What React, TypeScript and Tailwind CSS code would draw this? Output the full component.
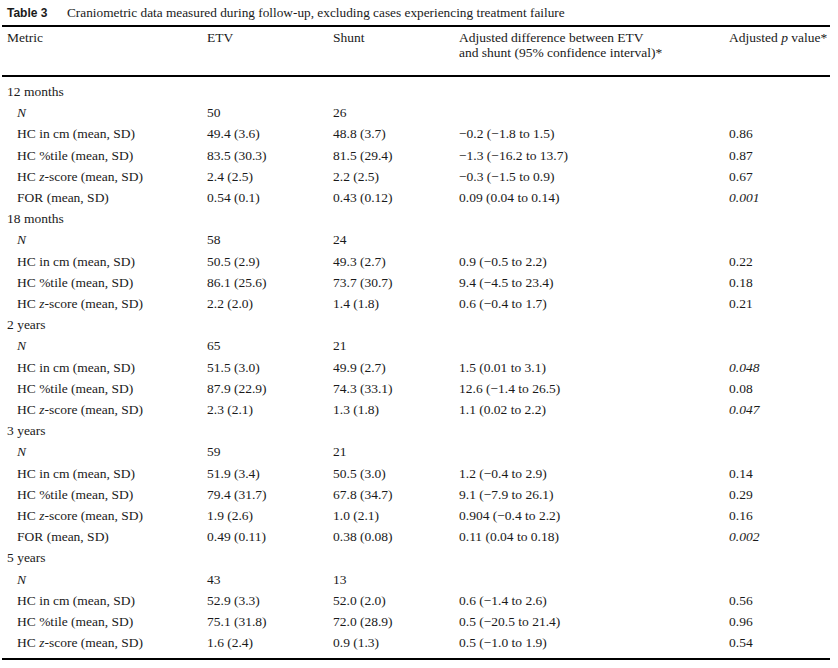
import React from 'react';

type Row = { label: React.ReactNode; etv: string; shunt: string; diff: string; p: string; pItalic?: boolean };
type Group = { title: string; rows: Row[] };

const z = <i>z</i>;

const groups: Group[] = [
  {
    title: '12 months',
    rows: [
      { label: <i>N</i>, etv: '50', shunt: '26', diff: '', p: '' },
      { label: 'HC in cm (mean, SD)', etv: '49.4 (3.6)', shunt: '48.8 (3.7)', diff: '−0.2 (−1.8 to 1.5)', p: '0.86' },
      { label: 'HC %tile (mean, SD)', etv: '83.5 (30.3)', shunt: '81.5 (29.4)', diff: '−1.3 (−16.2 to 13.7)', p: '0.87' },
      { label: <>HC {z}-score (mean, SD)</>, etv: '2.4 (2.5)', shunt: '2.2 (2.5)', diff: '−0.3 (−1.5 to 0.9)', p: '0.67' },
      { label: 'FOR (mean, SD)', etv: '0.54 (0.1)', shunt: '0.43 (0.12)', diff: '0.09 (0.04 to 0.14)', p: '0.001', pItalic: true },
    ],
  },
  {
    title: '18 months',
    rows: [
      { label: <i>N</i>, etv: '58', shunt: '24', diff: '', p: '' },
      { label: 'HC in cm (mean, SD)', etv: '50.5 (2.9)', shunt: '49.3 (2.7)', diff: '0.9 (−0.5 to 2.2)', p: '0.22' },
      { label: 'HC %tile (mean, SD)', etv: '86.1 (25.6)', shunt: '73.7 (30.7)', diff: '9.4 (−4.5 to 23.4)', p: '0.18' },
      { label: <>HC {z}-score (mean, SD)</>, etv: '2.2 (2.0)', shunt: '1.4 (1.8)', diff: '0.6 (−0.4 to 1.7)', p: '0.21' },
    ],
  },
  {
    title: '2 years',
    rows: [
      { label: <i>N</i>, etv: '65', shunt: '21', diff: '', p: '' },
      { label: 'HC in cm (mean, SD)', etv: '51.5 (3.0)', shunt: '49.9 (2.7)', diff: '1.5 (0.01 to 3.1)', p: '0.048', pItalic: true },
      { label: 'HC %tile (mean, SD)', etv: '87.9 (22.9)', shunt: '74.3 (33.1)', diff: '12.6 (−1.4 to 26.5)', p: '0.08' },
      { label: <>HC {z}-score (mean, SD)</>, etv: '2.3 (2.1)', shunt: '1.3 (1.8)', diff: '1.1 (0.02 to 2.2)', p: '0.047', pItalic: true },
    ],
  },
  {
    title: '3 years',
    rows: [
      { label: <i>N</i>, etv: '59', shunt: '21', diff: '', p: '' },
      { label: 'HC in cm (mean, SD)', etv: '51.9 (3.4)', shunt: '50.5 (3.0)', diff: '1.2 (−0.4 to 2.9)', p: '0.14' },
      { label: 'HC %tile (mean, SD)', etv: '79.4 (31.7)', shunt: '67.8 (34.7)', diff: '9.1 (−7.9 to 26.1)', p: '0.29' },
      { label: <>HC {z}-score (mean, SD)</>, etv: '1.9 (2.6)', shunt: '1.0 (2.1)', diff: '0.904 (−0.4 to 2.2)', p: '0.16' },
      { label: 'FOR (mean, SD)', etv: '0.49 (0.11)', shunt: '0.38 (0.08)', diff: '0.11 (0.04 to 0.18)', p: '0.002', pItalic: true },
    ],
  },
  {
    title: '5 years',
    rows: [
      { label: <i>N</i>, etv: '43', shunt: '13', diff: '', p: '' },
      { label: 'HC in cm (mean, SD)', etv: '52.9 (3.3)', shunt: '52.0 (2.0)', diff: '0.6 (−1.4 to 2.6)', p: '0.56' },
      { label: 'HC %tile (mean, SD)', etv: '75.1 (31.8)', shunt: '72.0 (28.9)', diff: '0.5 (−20.5 to 21.4)', p: '0.96' },
      { label: <>HC {z}-score (mean, SD)</>, etv: '1.6 (2.4)', shunt: '0.9 (1.3)', diff: '0.5 (−1.0 to 1.9)', p: '0.54' },
    ],
  },
];

export default function App() {
  return (
    <div className="w-[838px] h-[668px] bg-white text-[#1a1a1a] font-['Liberation_Serif',serif] text-[13.5px]">
      <div className="flex items-baseline pl-[7px] pt-[3px] h-[25px]">
        <span className="font-['Liberation_Sans',sans-serif] font-bold text-[12px] w-[60px]">Table 3</span>
        <span className="text-[13.3px]">Craniometric data measured during follow-up, excluding cases experiencing treatment failure</span>
      </div>
      <table className="ml-[2px] w-[828px] table-fixed border-collapse border-t-2 border-b-2 border-black">
        <colgroup>
          <col className="w-[205px]" />
          <col className="w-[126px]" />
          <col className="w-[126px]" />
          <col className="w-[270px]" />
          <col />
        </colgroup>
        <thead>
          <tr className="border-b-2 border-black align-top leading-[15px]">
            <th className="font-normal text-left pl-[5px] pt-[3px] pb-[30px]">Metric</th>
            <th className="font-normal text-left pt-[3px]">ETV</th>
            <th className="font-normal text-left pt-[3px]">Shunt</th>
            <th className="font-normal text-left pt-[3px]">
              Adjusted difference between ETV
              <br />
              and shunt (95% confidence interval)*
            </th>
            <th className="font-normal text-left pt-[3px]">
              Adjusted <i>p</i> value*
            </th>
          </tr>
        </thead>
        <tbody className="leading-[21.2px]">
          <tr className="h-[5px]"><td colSpan={5} /></tr>
          {groups.map((g) => (
            <React.Fragment key={g.title}>
              <tr>
                <td className="pl-[5px]" colSpan={5}>{g.title}</td>
              </tr>
              {g.rows.map((r, i) => (
                <tr key={i}>
                  <td className="pl-[15px]">{r.label}</td>
                  <td>{r.etv}</td>
                  <td>{r.shunt}</td>
                  <td>{r.diff}</td>
                  <td className={r.pItalic ? 'italic' : ''}>{r.p}</td>
                </tr>
              ))}
            </React.Fragment>
          ))}
          <tr className="h-[6px]"><td colSpan={5} /></tr>
        </tbody>
      </table>
    </div>
  );
}
